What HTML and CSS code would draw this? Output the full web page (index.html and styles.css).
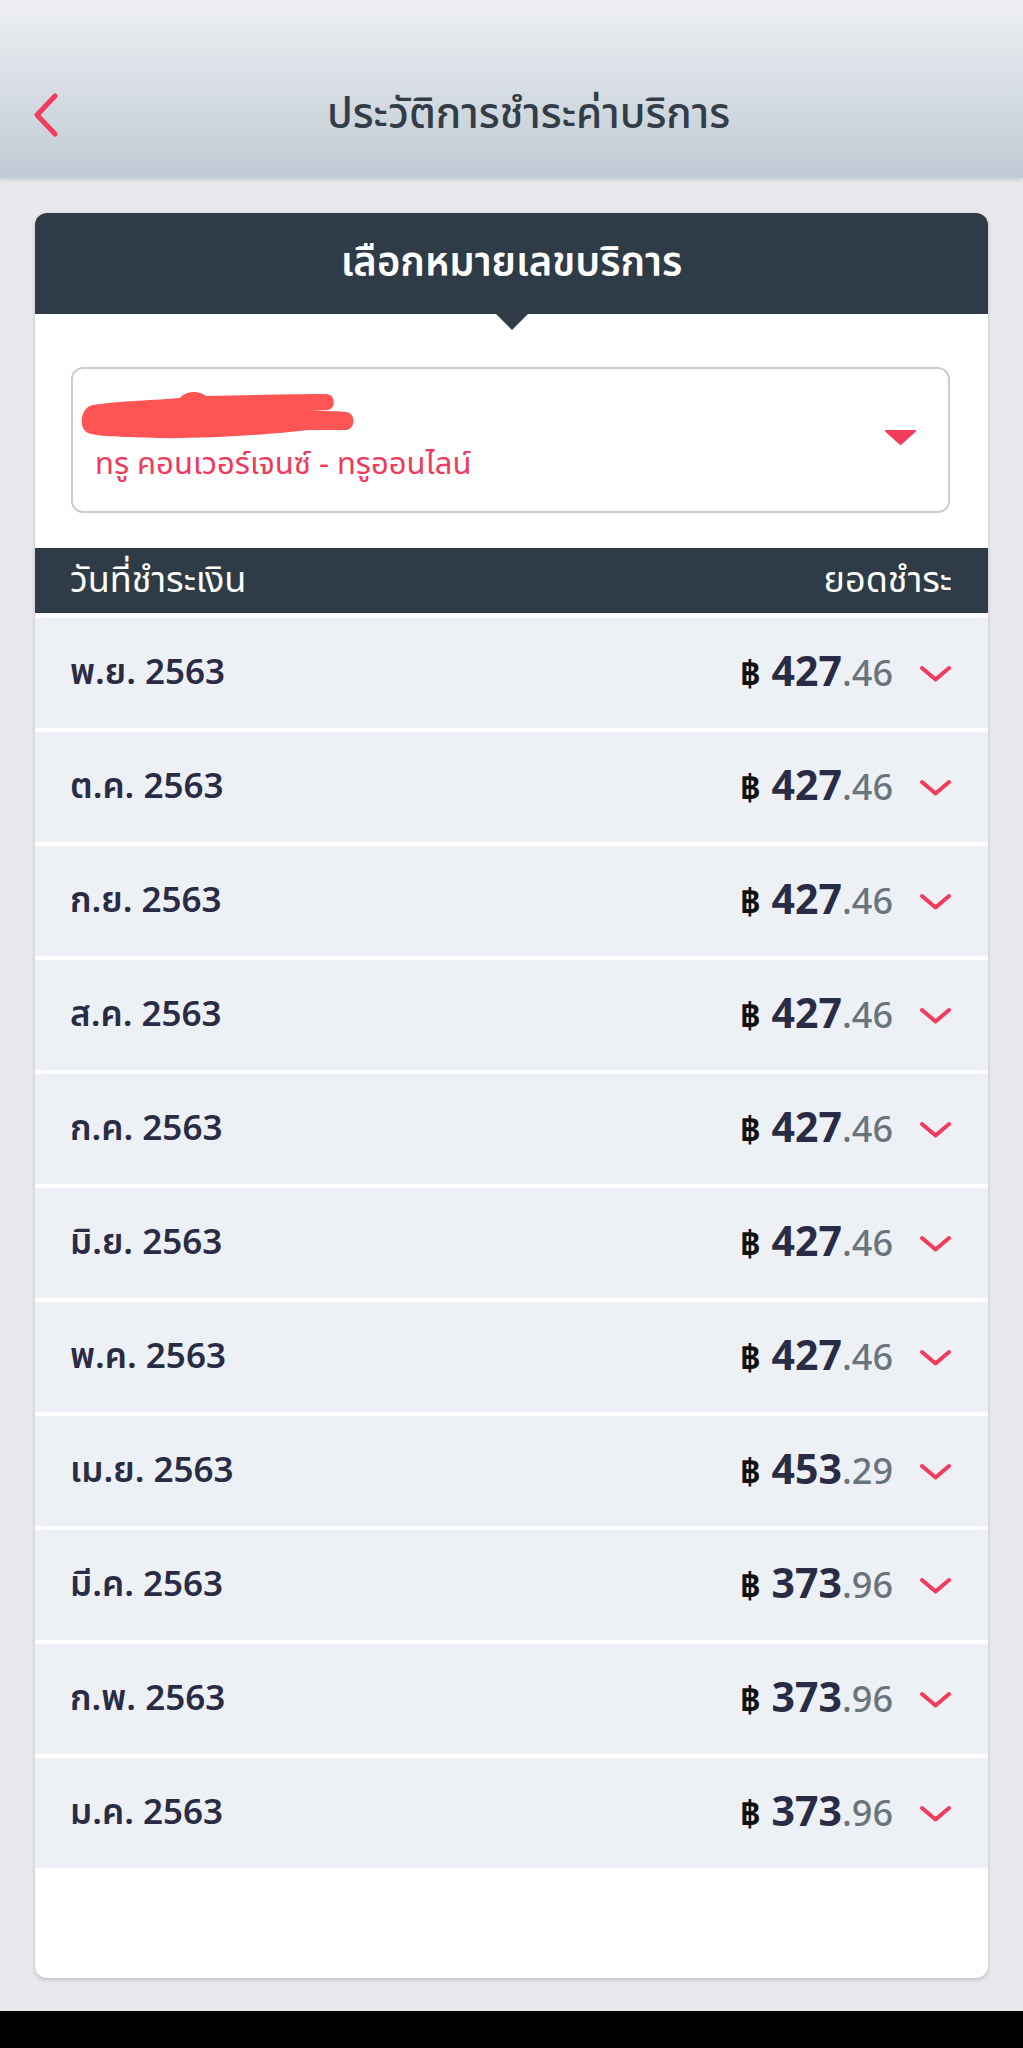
FILE: index.html
```html
<!DOCTYPE html>
<html lang="th">
<head>
    <meta charset="UTF-8">
    <meta name="viewport" content="width=device-width, initial-scale=1.0">
    <title>ประวัติการชำระค่าบริการ</title>
    <link rel="stylesheet" href="styles.css">
</head>
<body>
    <div class="topbar">
        <button class="back-btn" aria-label="back">
            <svg width="26" height="44" viewBox="0 0 26 44"><path d="M22 3 L4 22 L22 41" fill="none" stroke="#f23b5d" stroke-width="5" stroke-linecap="round" stroke-linejoin="round"/></svg>
        </button>
        <span class="topbar-title">ประวัติการชำระค่าบริการ</span>
    </div>

    <div class="card">
        <div class="card-head">เลือกหมายเลขบริการ</div>

        <div class="picker">
            <div class="picker-box">
                <div class="picker-info">
                    <!-- number hidden -->
                    <svg class="redacted" width="290" height="52" viewBox="0 0 290 52"><path d="M15 16 C40 12 80 11 102 9 C108 2 120 1 128 7 C170 6 220 5 248 5 C258 5 258 20 250 21 L232 22 C250 22 262 22 268 23 C278 24 278 40 268 41 L230 41 C190 46 120 50 80 49 C50 48 20 48 10 44 C0 40 2 18 15 16 Z" fill="#ff5454"/></svg>
                    <span class="picker-name">ทรู คอนเวอร์เจนซ์ - ทรูออนไลน์</span>
                </div>
                <svg class="picker-arrow" width="33" height="17" viewBox="0 0 33 17"><path d="M2 2 L31 2 L16.5 15 Z" fill="#f43c5f" stroke="#f43c5f" stroke-width="2" stroke-linejoin="round"/></svg>
            </div>
        </div>

        <div class="table-head">
            <span>วันที่ชำระเงิน</span>
            <span>ยอดชำระ</span>
        </div>

        <div class="bill-list">
            <div class="bill-row">
                <span class="bill-date">พ.ย. 2563</span>
                <span class="bill-amount"><span class="baht">฿</span> 427<span class="dec">.46</span></span>
                <svg class="chev" width="33" height="17" viewBox="0 0 33 17"><path d="M3 3 L16.5 14.5 L30 3" fill="none" stroke="#f23b5d" stroke-width="4" stroke-linecap="round" stroke-linejoin="round"/></svg>
            </div>
            <div class="bill-row">
                <span class="bill-date">ต.ค. 2563</span>
                <span class="bill-amount"><span class="baht">฿</span> 427<span class="dec">.46</span></span>
                <svg class="chev" width="33" height="17" viewBox="0 0 33 17"><path d="M3 3 L16.5 14.5 L30 3" fill="none" stroke="#f23b5d" stroke-width="4" stroke-linecap="round" stroke-linejoin="round"/></svg>
            </div>
            <div class="bill-row">
                <span class="bill-date">ก.ย. 2563</span>
                <span class="bill-amount"><span class="baht">฿</span> 427<span class="dec">.46</span></span>
                <svg class="chev" width="33" height="17" viewBox="0 0 33 17"><path d="M3 3 L16.5 14.5 L30 3" fill="none" stroke="#f23b5d" stroke-width="4" stroke-linecap="round" stroke-linejoin="round"/></svg>
            </div>
            <div class="bill-row">
                <span class="bill-date">ส.ค. 2563</span>
                <span class="bill-amount"><span class="baht">฿</span> 427<span class="dec">.46</span></span>
                <svg class="chev" width="33" height="17" viewBox="0 0 33 17"><path d="M3 3 L16.5 14.5 L30 3" fill="none" stroke="#f23b5d" stroke-width="4" stroke-linecap="round" stroke-linejoin="round"/></svg>
            </div>
            <div class="bill-row">
                <span class="bill-date">ก.ค. 2563</span>
                <span class="bill-amount"><span class="baht">฿</span> 427<span class="dec">.46</span></span>
                <svg class="chev" width="33" height="17" viewBox="0 0 33 17"><path d="M3 3 L16.5 14.5 L30 3" fill="none" stroke="#f23b5d" stroke-width="4" stroke-linecap="round" stroke-linejoin="round"/></svg>
            </div>
            <div class="bill-row">
                <span class="bill-date">มิ.ย. 2563</span>
                <span class="bill-amount"><span class="baht">฿</span> 427<span class="dec">.46</span></span>
                <svg class="chev" width="33" height="17" viewBox="0 0 33 17"><path d="M3 3 L16.5 14.5 L30 3" fill="none" stroke="#f23b5d" stroke-width="4" stroke-linecap="round" stroke-linejoin="round"/></svg>
            </div>
            <div class="bill-row">
                <span class="bill-date">พ.ค. 2563</span>
                <span class="bill-amount"><span class="baht">฿</span> 427<span class="dec">.46</span></span>
                <svg class="chev" width="33" height="17" viewBox="0 0 33 17"><path d="M3 3 L16.5 14.5 L30 3" fill="none" stroke="#f23b5d" stroke-width="4" stroke-linecap="round" stroke-linejoin="round"/></svg>
            </div>
            <div class="bill-row">
                <span class="bill-date">เม.ย. 2563</span>
                <span class="bill-amount"><span class="baht">฿</span> 453<span class="dec">.29</span></span>
                <svg class="chev" width="33" height="17" viewBox="0 0 33 17"><path d="M3 3 L16.5 14.5 L30 3" fill="none" stroke="#f23b5d" stroke-width="4" stroke-linecap="round" stroke-linejoin="round"/></svg>
            </div>
            <div class="bill-row">
                <span class="bill-date">มี.ค. 2563</span>
                <span class="bill-amount"><span class="baht">฿</span> 373<span class="dec">.96</span></span>
                <svg class="chev" width="33" height="17" viewBox="0 0 33 17"><path d="M3 3 L16.5 14.5 L30 3" fill="none" stroke="#f23b5d" stroke-width="4" stroke-linecap="round" stroke-linejoin="round"/></svg>
            </div>
            <div class="bill-row">
                <span class="bill-date">ก.พ. 2563</span>
                <span class="bill-amount"><span class="baht">฿</span> 373<span class="dec">.96</span></span>
                <svg class="chev" width="33" height="17" viewBox="0 0 33 17"><path d="M3 3 L16.5 14.5 L30 3" fill="none" stroke="#f23b5d" stroke-width="4" stroke-linecap="round" stroke-linejoin="round"/></svg>
            </div>
            <div class="bill-row">
                <span class="bill-date">ม.ค. 2563</span>
                <span class="bill-amount"><span class="baht">฿</span> 373<span class="dec">.96</span></span>
                <svg class="chev" width="33" height="17" viewBox="0 0 33 17"><path d="M3 3 L16.5 14.5 L30 3" fill="none" stroke="#f23b5d" stroke-width="4" stroke-linecap="round" stroke-linejoin="round"/></svg>
            </div>
        </div>
    </div>

    <div class="navbar"></div>
</body>
</html>
```

FILE: styles.css
```css
body {
    font-family: "Noto Sans Thai", "Noto Sans Thai UI", "Noto Sans", "DejaVu Sans", sans-serif;
    margin: 0;
    background-color: #e8e8ed;
}

.topbar {
    position: relative;
    display: flex;
    align-items: center;
    justify-content: center;
    box-sizing: border-box;
    height: 178px;
    padding-top: 52px;
    padding-left: 34px;
    background: linear-gradient(#eef0f3, #c0cad4);
    box-shadow: 0 2px 4px rgba(0, 0, 0, 0.12);
}

.back-btn {
    position: absolute;
    left: 33px;
    top: 93px;
    padding: 0;
    border: none;
    background: none;
    line-height: 0;
    cursor: pointer;
}

.topbar-title {
    font-size: 42px;
    font-weight: 500;
    color: #333d47;
}

.card {
    margin: 35px 35px 33px;
    padding-bottom: 110px;
    background-color: #fff;
    border-radius: 12px;
    box-shadow: 0 2px 4px rgba(0, 0, 0, 0.18);
    overflow: hidden;
}

.card-head {
    position: relative;
    display: flex;
    align-items: center;
    justify-content: center;
    height: 101px;
    background-color: #2f3b46;
    color: #fff;
    font-size: 40px;
    font-weight: 600;
}

.card-head::after {
    content: "";
    position: absolute;
    left: 50%;
    bottom: -16px;
    margin-left: -16px;
    border-left: 16px solid transparent;
    border-right: 16px solid transparent;
    border-top: 16px solid #2f3b46;
}

.picker {
    padding: 53px 38px 35px 36px;
}

.picker-box {
    display: flex;
    align-items: center;
    justify-content: space-between;
    box-sizing: border-box;
    height: 146px;
    padding: 0 31px 0 22px;
    border: 2px solid #c9ced5;
    border-radius: 12px;
}

.picker-info {
    display: flex;
    flex-direction: column;
    margin-top: -4px;
}

.redacted {
    display: block;
    margin-left: -17px;
}

.picker-name {
    margin-top: 2px;
    font-size: 31px;
    line-height: 44px;
    color: #ef3a5d;
}

.picker-arrow {
    margin-top: -6px;
}

.table-head {
    display: flex;
    align-items: center;
    justify-content: space-between;
    height: 65px;
    padding: 0 36px 0 35px;
    background-color: #2f3b46;
    color: #fff;
    font-size: 36px;
}

.bill-list {
    display: flex;
    flex-direction: column;
    gap: 4px;
    padding-top: 5px;
}

.bill-row {
    display: flex;
    align-items: center;
    height: 110px;
    padding: 0 36px 0 35px;
    background-color: #edf1f5;
}

.bill-date {
    flex: 1;
    font-size: 35px;
    font-weight: 600;
    color: #2a2b45;
}

.bill-amount {
    font-size: 41px;
    font-weight: 700;
    color: #2a2b45;
}

.baht {
    font-size: 36px;
    color: #111;
}

.dec {
    font-size: 36px;
    font-weight: 500;
    color: #6a747d;
}

.chev {
    margin-left: 26px;
}

.navbar {
    height: 37px;
    background-color: #000;
}
```
